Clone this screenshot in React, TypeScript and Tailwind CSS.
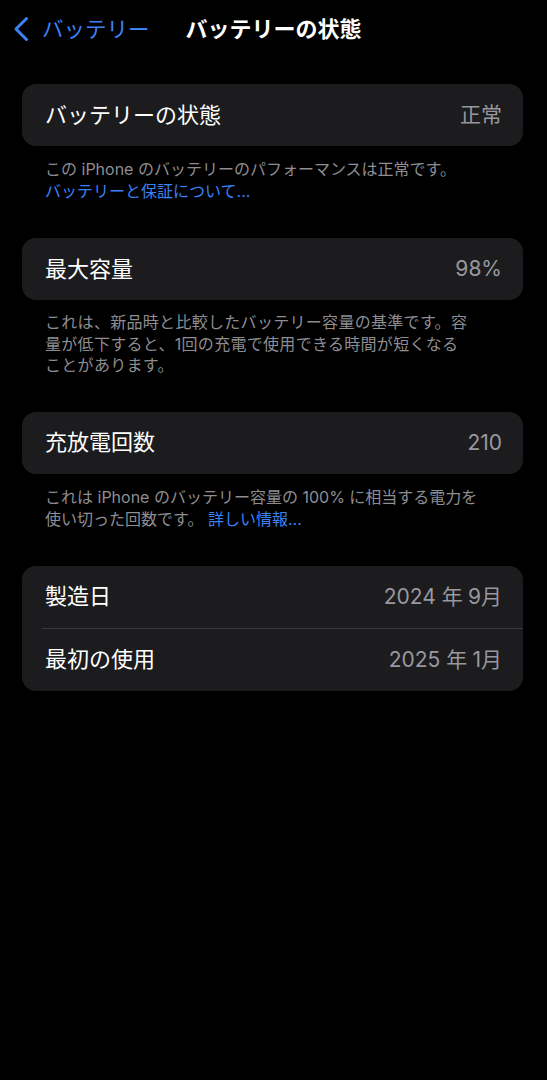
const font = { fontFamily: 'Inter, "Noto Sans CJK JP", sans-serif' };

const Row = ({ label, value }: { label: string; value: string }) => (
  <div className="flex h-[62px] items-center justify-between pl-[23px] pr-[21px]">
    <span className="text-[22px] text-white">{label}</span>
    <span className="text-[21px] text-[#98989e]">{value}</span>
  </div>
);

const App = () => {
  return (
    <div className="min-h-[1080px] w-full bg-black" style={font}>
      {/* nav bar */}
      <div className="relative flex h-[58px] items-center">
        <div className="flex items-center pl-[12px] text-[#3b82f6]">
          <svg width="18" height="26" viewBox="0 0 18 26" fill="none">
            <polyline
              points="14.5,2.5 4,13 14.5,23.5"
              stroke="currentColor"
              strokeWidth="3"
              strokeLinecap="round"
              strokeLinejoin="round"
            />
          </svg>
          <span className="ml-[12px] text-[21.5px]">バッテリー</span>
        </div>
        <div className="pointer-events-none absolute left-0 right-0 top-0 flex h-[58px] items-center justify-center">
          <span className="text-[22px] font-bold text-white">バッテリーの状態</span>
        </div>
      </div>

      <div className="pl-[22px] pr-[24px] pt-[26px]">
        {/* battery health */}
        <div className="rounded-[14px] bg-[#1c1c1e]">
          <Row label="バッテリーの状態" value="正常" />
        </div>
        <p className="mt-[12px] px-[23px] text-[16px] leading-[22px] text-[#8d8d92]">
          この iPhone のバッテリーのパフォーマンスは正常です。
          <br />
          <span className="text-[#3b82f6]">バッテリーと保証について...</span>
        </p>

        {/* max capacity */}
        <div className="mt-[36px] rounded-[14px] bg-[#1c1c1e]">
          <Row label="最大容量" value="98%" />
        </div>
        <p className="mt-[12px] px-[23px] text-[16px] leading-[21.5px] tracking-[0.3px] text-[#8d8d92]">
          これは、新品時と比較したバッテリー容量の基準です。容
          <br />
          量が低下すると、1回の充電で使用できる時間が短くなる
          <br />
          ことがあります。
        </p>

        {/* cycle count */}
        <div className="mt-[35px] rounded-[14px] bg-[#1c1c1e]">
          <Row label="充放電回数" value="210" />
        </div>
        <p className="mt-[12px] px-[23px] text-[16px] leading-[22px] text-[#8d8d92]">
          これは iPhone のバッテリー容量の 100% に相当する電力を
          <br />
          使い切った回数です。 <span className="text-[#3b82f6]">詳しい情報...</span>
        </p>

        {/* dates */}
        <div className="mt-[36px] rounded-[14px] bg-[#1c1c1e]">
          <Row label="製造日" value={"2024 年\u20059月"} />
          <div className="ml-[20px] h-px bg-[#38383a]" />
          <Row label="最初の使用" value={"2025 年\u20051月"} />
        </div>
      </div>
    </div>
  );
};

export default App;
